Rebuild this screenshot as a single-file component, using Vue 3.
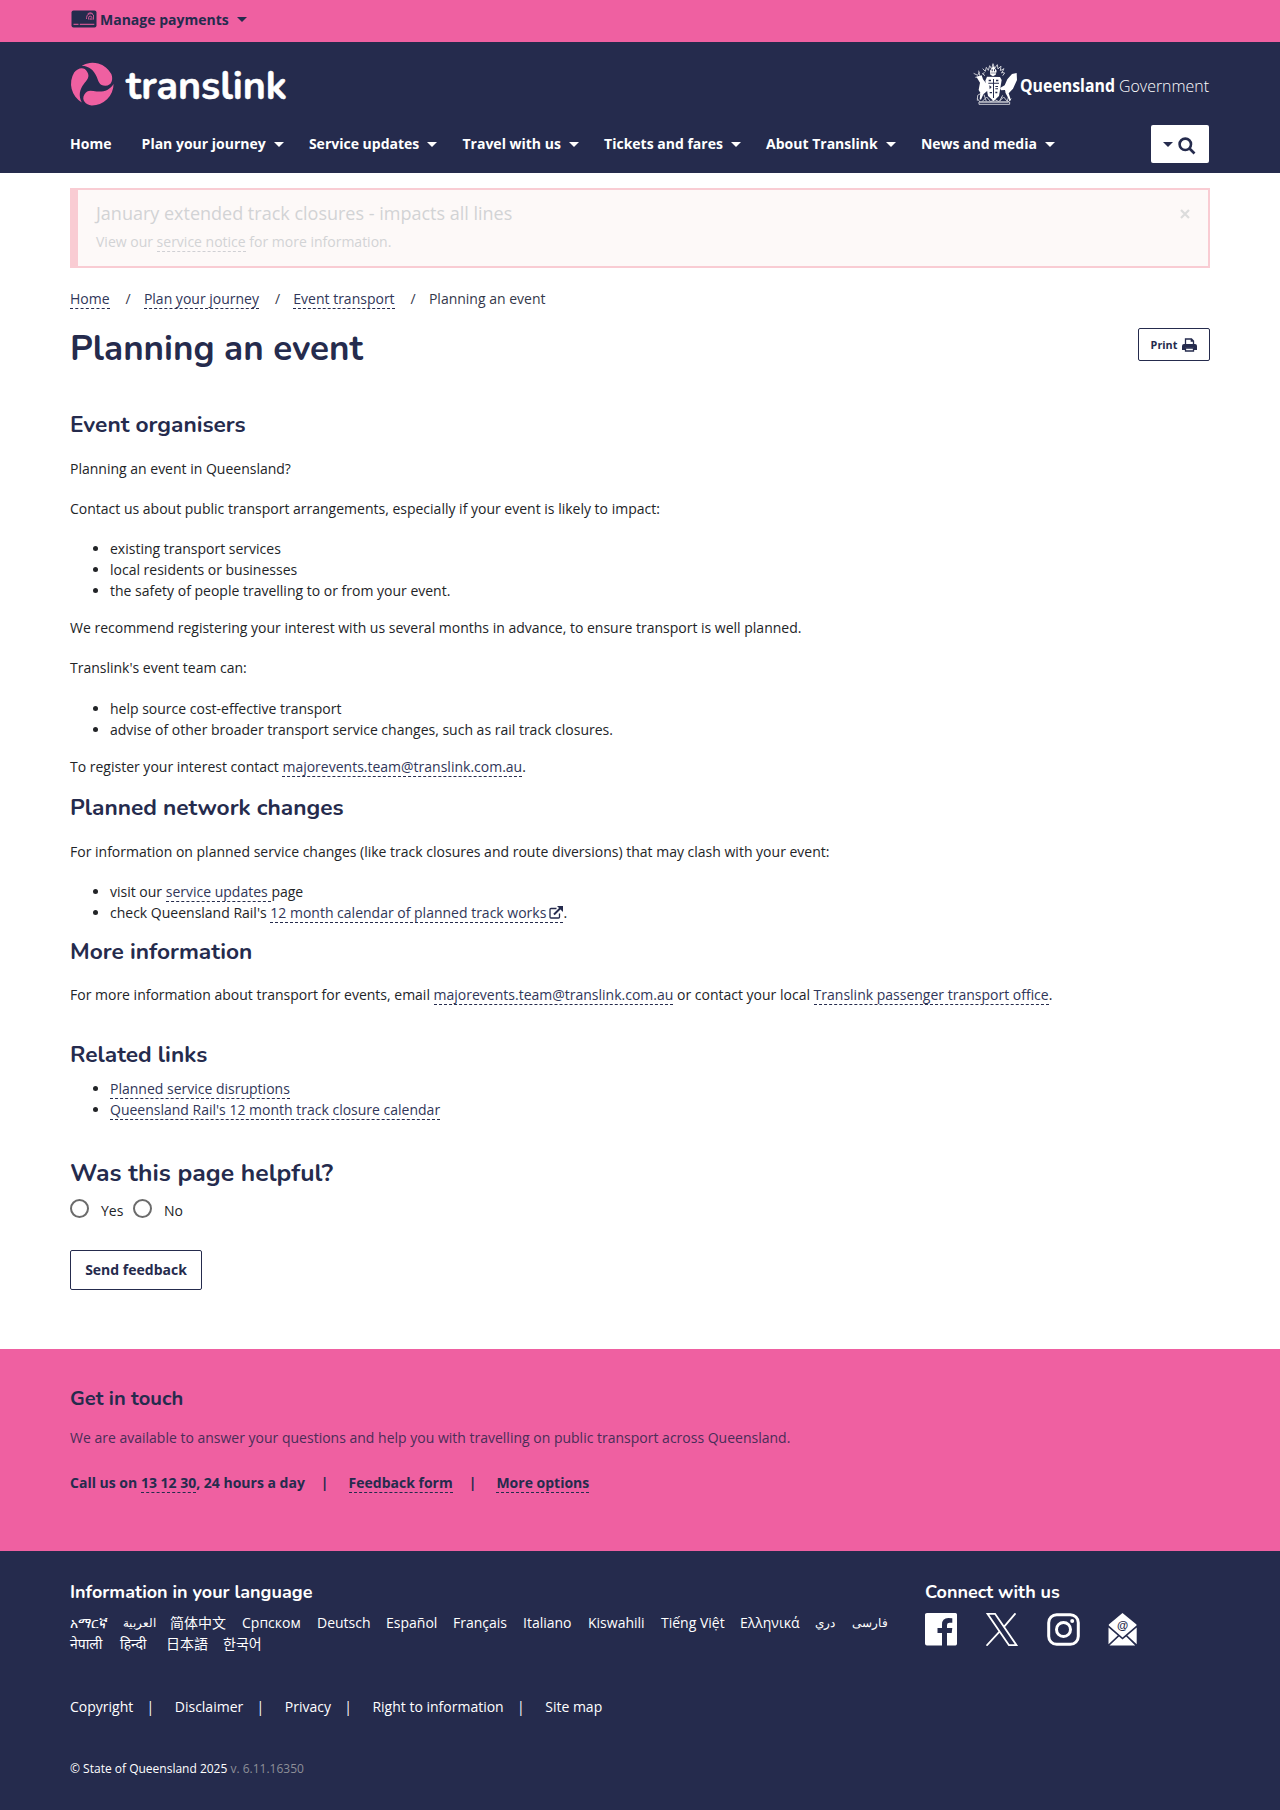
<script setup>
const nav = [
  { label: 'Home' },
  { label: 'Plan your journey', menu: true },
  { label: 'Service updates', menu: true },
  { label: 'Travel with us', menu: true },
  { label: 'Tickets and fares', menu: true },
  { label: 'About Translink', menu: true },
  { label: 'News and media', menu: true },
]
const languages = [
  { name: 'አማርኛ', w: 53 }, { name: 'العربية', w: 47, rtl: true }, { name: '简体中文', w: 72 },
  { name: 'Српском', w: 75 }, { name: 'Deutsch', w: 69 }, { name: 'Español', w: 67 },
  { name: 'Français', w: 70 }, { name: 'Italiano', w: 65 }, { name: 'Kiswahili', w: 73 },
  { name: 'Tiếng Việt', w: 79 }, { name: 'Ελληνικά', w: 75 }, { name: 'دري', w: 37, rtl: true },
  { name: 'فارسی', w: 40, rtl: true }, { name: 'नेपाली', w: 50 }, { name: 'हिन्दी', w: 46 },
  { name: '日本語', w: 57 }, { name: '한국어', w: 60 },
]
const legal = ['Copyright', 'Disclaimer', 'Privacy', 'Right to information', 'Site map']
</script>

<template>
  <div class="page">
    <div class="topbar">
      <div class="wrap topbar-in">
        <svg class="card" width="26" height="18" viewBox="0 0 26 18">
          <rect x="0.5" y="0.5" width="25" height="17" rx="2" />
          <path d="M2.500 14.300h5M8.800 14.300h14.500" class="ln" />
          <path d="M15.500 9v-1.500a4 4 0 0 1 7-2.500v4.600M17.500 9.500v-1.700a1.700 1.700 0 0 1 3.400 0v2.200M19.200 7.800v2.200M16.700 3.700a4.500 4.500 0 0 1 5-.2" class="thin" />
        </svg>
        <span class="tb-label">Manage payments</span>
        <i class="caret"></i>
      </div>
    </div>

    <header class="header">
      <div class="wrap">
        <div class="brand">
          <svg class="logo" width="220" height="46" viewBox="0 0 220 46" role="img">
            <g class="pink" transform="translate(-20 -61) scale(.33333)">
              <path v-for="r in [0, 120, 240]" :key="r" :transform="`rotate(${r} 127 252)`"
                d="M95 197A64.500 64.500 0 0 1 184 222C190 238 186 257 166 257C148 257 146 244 140 230C132 211 118 198 95 197Z" />
            </g>
            <text x="56" y="38" textLength="161" lengthAdjust="spacingAndGlyphs">translink</text>
          </svg>
          <svg class="gov" width="240" height="46" viewBox="0 0 240 46" role="img">
            <g transform="translate(-10 -11) scale(.33333)">
              <g class="arms-line">
                <path d="M52 146l8 10h84l10-10M57 163h92v-7H57z" />
                <path d="M68 56l8 8 3-12 6 9 4-14 6 10 4-16 5 14 8-11 2 13 9-9-2 14 11-6-7 14M74 68l-7 3 8 6M124 67l10 2-6 8" />
                <path d="M41 70l12 6 5-10M46 82l10-1M56 62l3 15" />
                <path d="M66 128l-13 8-1 16M72 134l7 20M138 128l8 10-4 16M128 136l-9 17M66 155l14-14 12 14 13-6 12 6 14-14 12 14" />
              </g>
              <path class="w" d="M49 80l16-4 4 12 14 18 1 15-14 12-7 16-4-1 2-20-5-8 4-22zM170 69l-14 3-14 16-8 18-14 8 3 7 12-1 2 10 12 22 4-1-7-21 13-14 12-26z" />
              <path class="w" d="M90 62l10-14 10 14-3 12-8 5-8-5z" />
              <path class="d" d="M95 58h3v6h-3zM102 58h3v6h-3zM93 68h15v2H93z" />
              <path class="w" d="M81 80l39 1 5 9-8 48-16 15-17-15-8-46z" />
              <path class="d" d="M85 98h32v3H85zM99 87h3v57h-3zM86 89h7v5h-7zM108 89h7v5h-7zM88 106l7 5-6 7zM106 108h8v3h-8zM106 115h8v3h-8zM89 126h7v4h-7zM106 125h6v5h-6z" />
            </g>
            <text class="qb" x="50" y="30.500" textLength="95" lengthAdjust="spacingAndGlyphs">Queensland</text>
            <text class="ql" x="149" y="30.500" textLength="90" lengthAdjust="spacingAndGlyphs">Government</text>
          </svg>
        </div>
        <div class="navrow">
          <nav class="nav">
            <a v-for="n in nav" :key="n.label" :class="{ first: !n.menu }">{{ n.label }}<i v-if="n.menu" class="caret"></i></a>
          </nav>
          <button class="search">
            <i class="caret small"></i>
            <svg width="18" height="18" viewBox="0 0 18 18"><circle cx="7.300" cy="7.300" r="5.700" /><path d="M11.500 11.500l5 5" /></svg>
          </button>
        </div>
      </div>
    </header>

    <main class="wrap">
      <section class="alert">
        <div>
          <div class="alert-title">January extended track closures - impacts all lines</div>
          <div class="alert-text">View our <a>service notice</a> for more information.</div>
        </div>
        <svg class="close" width="10" height="10" viewBox="0 0 10 10"><path d="M1 1l8 8M9 1l-8 8" /></svg>
      </section>

      <div class="crumbs">
        <a>Home</a><span class="sep">/</span><a>Plan your journey</a><span class="sep">/</span><a>Event transport</a><span class="sep">/</span><span>Planning an event</span>
      </div>

      <div class="titlerow">
        <h1>Planning an event</h1>
        <button class="print">Print
          <svg width="15" height="14" viewBox="0 0 15 14">
            <path class="o" d="M3.500 7V1h6l2 2v4M9.300 1v2.200h2.200" />
            <path class="f" d="M0 12V8q0-2 2-2h11q2 0 2 2v4h-3V9.800H3V12z" />
            <path class="o" d="M3.500 10h8v3h-8z" />
          </svg>
        </button>
      </div>

      <article>
        <h2 class="h-organisers">Event organisers</h2>
        <p>Planning an event in Queensland?</p>
        <p>Contact us about public transport arrangements, especially if your event is likely to impact:</p>
        <ul>
          <li>existing transport services</li>
          <li>local residents or businesses</li>
          <li>the safety of people travelling to or from your event.</li>
        </ul>
        <p>We recommend registering your interest with us several months in advance, to ensure transport is well planned.</p>
        <p class="tail">Translink's event team can:</p>
        <ul>
          <li>help source cost-effective transport</li>
          <li>advise of other broader transport service changes, such as rail track closures.</li>
        </ul>
        <p>To register your interest contact <a>majorevents.team@translink.com.au</a>.</p>
        <h2 class="h-network">Planned network changes</h2>
        <p>For information on planned service changes (like track closures and route diversions) that may clash with your event:</p>
        <ul>
          <li>visit our <a>service updates&nbsp;</a>page</li>
          <li>check Queensland Rail's <a>12 month calendar of planned track works<svg class="ext" width="14" height="13" viewBox="0 0 14 13"><path d="M7.500 2.500H2q-1 0-1 1V11q0 1 1 1h7.500q1 0 1-1V7.500" /><path class="arr" d="M5 8.500L11.500 2" /><path class="head" d="M8 0h6v6z" /></svg></a>.</li>
        </ul>
        <h2 class="h-more">More information</h2>
        <p>For more information about transport for events, email <a>majorevents.team@translink.com.au</a> or contact your local <a>Translink passenger transport office</a>.</p>
        <h2 class="h-related">Related links</h2>
        <ul>
          <li><a>Planned service disruptions</a></li>
          <li><a>Queensland Rail's 12 month track closure calendar</a></li>
        </ul>
      </article>

      <form class="helpful">
        <h2>Was this page helpful?</h2>
        <div class="radios">
          <label><i class="radio"></i><span>Yes</span></label>
          <label><i class="radio"></i><span>No</span></label>
        </div>
        <button type="button" class="send">Send feedback</button>
      </form>
    </main>

    <section class="touch">
      <div class="wrap">
        <h3>Get in touch</h3>
        <div class="lead">We are available to answer your questions and help you with travelling on public transport across Queensland.</div>
        <div class="contact">
          <span>Call us on <a>13 12 30</a>, 24 hours a day</span><span class="pipe">|</span><a>Feedback form</a><span class="pipe">|</span><a>More options</a>
        </div>
      </div>
    </section>

    <footer class="footer">
      <div class="wrap">
        <div class="cols">
          <div class="langs-col">
            <h4>Information in your language</h4>
            <div class="langs">
              <a v-for="l in languages" :key="l.name" :class="{ rtl: l.rtl }" :style="{ width: l.w + 'px' }"><bdi>{{ l.name }}</bdi></a>
            </div>
          </div>
          <div>
            <h4>Connect with us</h4>
            <div class="social">
              <svg width="33" height="33" viewBox="0 0 33 33"><path class="w" d="M2 0h28.500Q32 0 32 1.500v29Q32 32.500 30.500 32.500H22V20h4.700l.6-5H22v-3q0-2.300 2.500-2.300h2.800V5.200q-1.500-.3-4-.3-6.300 0-6.300 6.500V15h-4.500v5H17v12.500H2Q0 32.500 0 30.500v-29Q0 0 2 0z" /></svg>
              <svg width="33" height="33" viewBox="0 0 33 33"><path class="s" d="M1.500 .8h7.500L30.500 32.200h-7.500zM29.500 .3L17.500 14.300M13.500 18.600L.5 32.700" /></svg>
              <svg width="33" height="33" viewBox="0 0 33 33"><rect class="s3" x="1.700" y="1.700" width="29.600" height="29.600" rx="8" /><circle class="s3" cx="16.500" cy="16.500" r="7" /><circle class="w" cx="25.200" cy="8" r="2" /></svg>
              <svg width="30" height="33" viewBox="0 0 30 33"><path class="w" d="M14.500 0L28.500 11.500v1L14.500 24.500.8 12.500v-1zM.5 14.500L9.800 22.500.5 31.200zM28.700 14.500L19.300 22.500l9.400 8.700zM11 23.600l3.500 3 3.700-3 9 9H1.500z" /><text x="14.500" y="16" text-anchor="middle">@</text></svg>
            </div>
          </div>
        </div>
        <div class="legal">
          <template v-for="(l, i) in legal" :key="l"><span v-if="i" class="bar">|</span><a>{{ l }}</a></template>
        </div>
        <div class="copy">© State of Queensland 2025 <span>v. 6.11.16350</span></div>
      </div>
    </footer>
  </div>
</template>

<style>
body { margin: 0; background: #fff; }
</style>

<style scoped>
.page { font: 14px/21px "Open Sans", "Noto Sans", "Noto Sans CJK SC", sans-serif; color: #222427; width: 1280px; height: 1810px; display: flex; flex-direction: column; overflow: hidden; }
.wrap { width: 1140px; margin: 0 auto; }
h1, h2, h3, h4 { font-family: Nunito, Lato, sans-serif; font-weight: 660; color: #252b4d; margin: 0; white-space: nowrap; }
button { font: inherit; font-weight: 700; color: #252b4d; background: #fff; border: 1px solid #252b4d; border-radius: 2px; padding: 0; box-sizing: border-box; }
a { color: #303659; }
.caret { display: inline-block; border: 5px solid transparent; border-top: 5.500px solid currentColor; border-bottom: 0; }

.topbar { background: #ef60a1; height: 42px; flex: none; color: #252b4d; }
.topbar-in { display: flex; align-items: center; height: 39px; }
.card { margin: -1px 3px 0 1px; fill: #252b4d; }
.ln { stroke: #ef60a1; stroke-width: 1; }
.thin { stroke: #ef60a1; stroke-width: .8; fill: none; }
.tb-label { font-weight: 700; }
.topbar .caret { margin-left: 8px; }

.header { background: #252b4d; height: 131px; flex: none; }
.brand { display: flex; justify-content: space-between; padding: 19px 0 0; height: 64px; box-sizing: border-box; }
.logo, .gov { overflow: visible; }
.pink { fill: #ef60a1; }
.logo text { font: 700 40px Nunito, Lato, sans-serif; fill: #fff; stroke: #fff; stroke-width: .5; stroke-linejoin: round; }
.gov text { fill: #fff; font-family: "Open Sans", sans-serif; font-size: 17px; }
.gov .qb { font-weight: 700; }
.gov .ql { font-weight: 300; }
.arms-line { fill: none; stroke: #fff; stroke-width: 3; opacity: .75; }
.w { fill: #fff; }
.d { fill: #252b4d; }
.navrow { display: flex; justify-content: space-between; padding-top: 19px; }
.nav { display: flex; gap: 25.200px; font-weight: 700; line-height: 38px; }
.nav a { white-space: nowrap; color: #fff; }
.nav .first { margin-right: 5px; }
.nav .caret { margin-left: 8px; vertical-align: 2px; }
.search { width: 58px; height: 38px; border: 0; margin-right: 1px; display: flex; align-items: center; justify-content: center; gap: 5px; }
.search svg { fill: none; stroke: #252b4d; stroke-width: 2.600; margin-top: 3px; }
.small { border-left-width: 4.500px; border-right-width: 4.500px; border-top-width: 5px; }
.search .small { border-left-width: 5px; border-right-width: 5px; margin-left: -2px; }

.alert { margin-top: 15px; height: 80px; box-sizing: border-box; border: 2px solid #f9ccd3; border-left-width: 8px; background: #fdf9f8; color: #d2d3d5; padding: 11px 18px 0 18px; display: flex; justify-content: space-between; }
.alert-title { font-size: 18px; line-height: 24px; }
.alert-text { margin-top: 6px; }
.alert .alert-text a { color: #d2d3d5; border-color: #d0d0d4; }
.close { fill: none; stroke: #dcdcdc; stroke-width: 2.200; margin-top: 8px; }
main a, .contact a { border-bottom: 1px dashed #252b4d; }
.crumbs { margin-top: 20px; color: #34384a; }
.sep { margin: 0 13.200px 0 16px; }
.titlerow { display: flex; justify-content: space-between; height: 54px; margin-top: 15px; }
h1 { font-size: 35px; line-height: 49px; }
.print { width: 72px; height: 33px; margin-top: 4px; font-size: 10.800px; display: flex; align-items: center; justify-content: center; gap: 5px; }
.o { fill: #fff; stroke: #252b4d; stroke-width: 1.300; }
.f { fill: #252b4d; }

article { margin-top: 34px; }
h2 { font-size: 22.700px; line-height: 26px; }
article p { margin: 0 0 19px; white-space: nowrap; }
article .tail { margin-bottom: 20px; }
article ul { margin: 0 0 16px; padding-left: 40px; }
.h-organisers { margin-bottom: 20px; }
.h-network { margin: -1px 0 20px; }
.h-more { margin: 0 0 19px; }
.h-related { margin: 37px 0 10px; }
.ext { margin-left: 3px; vertical-align: -1px; fill: none; stroke: #252b4d; stroke-width: 1.300; }
.arr { stroke-width: 2; }
.head { fill: #252b4d; stroke: none; }
.helpful { margin-top: 38px; }
.helpful h2 { font-size: 24.700px; line-height: 30px; }
.radios { display: flex; height: 21px; margin-top: 11px; }
.radios label { display: flex; width: 63px; }
.radio { width: 19px; height: 19px; box-sizing: border-box; border: 2px solid #6b6b6b; border-radius: 50%; margin-right: 12px; }
.radios span { margin-top: 1px; }
.send { width: 132px; height: 40px; margin-top: 30px; padding-bottom: 2px; display: block; }

.touch { margin-top: 59px; flex: none; height: 202px; background: #ef60a1; color: #252b4d; overflow: hidden; }
.touch h3 { font-size: 20.100px; line-height: 24px; margin-top: 38px; }
.lead { margin-top: 16px; color: #4a2d58; }
.contact { margin-top: 24px; font-weight: 700; }
.contact a { color: #252b4d; }
.pipe { margin: 0 20px 0 16px; }

.footer { background: #252b4d; color: #fff; flex: 1; }
.footer a { color: #fff; }
h4 { color: #fff; font-size: 18px; font-weight: 700; line-height: 24px; }
.cols { display: flex; padding-top: 29px; height: 119px; }
.langs-col { width: 855px; }
.langs { display: flex; flex-wrap: wrap; width: 835px; margin-top: 8px; }
.langs a { white-space: nowrap; }
.langs .rtl { font-size: 11.500px; }
.social { display: flex; gap: 28px; margin-top: 9px; }
.s { fill: none; stroke: #fff; stroke-width: 1.800; }
.s3 { fill: none; stroke: #fff; stroke-width: 3; }
.social text { font: 700 11.500px "Liberation Sans", sans-serif; fill: #252b4d; }
.legal { margin-top: -3px; }
.bar { margin: 0 20.500px 0 13.300px; }
.copy { margin-top: 41px; font-size: 12px; }
.copy span { color: #8d8f98; }
</style>
